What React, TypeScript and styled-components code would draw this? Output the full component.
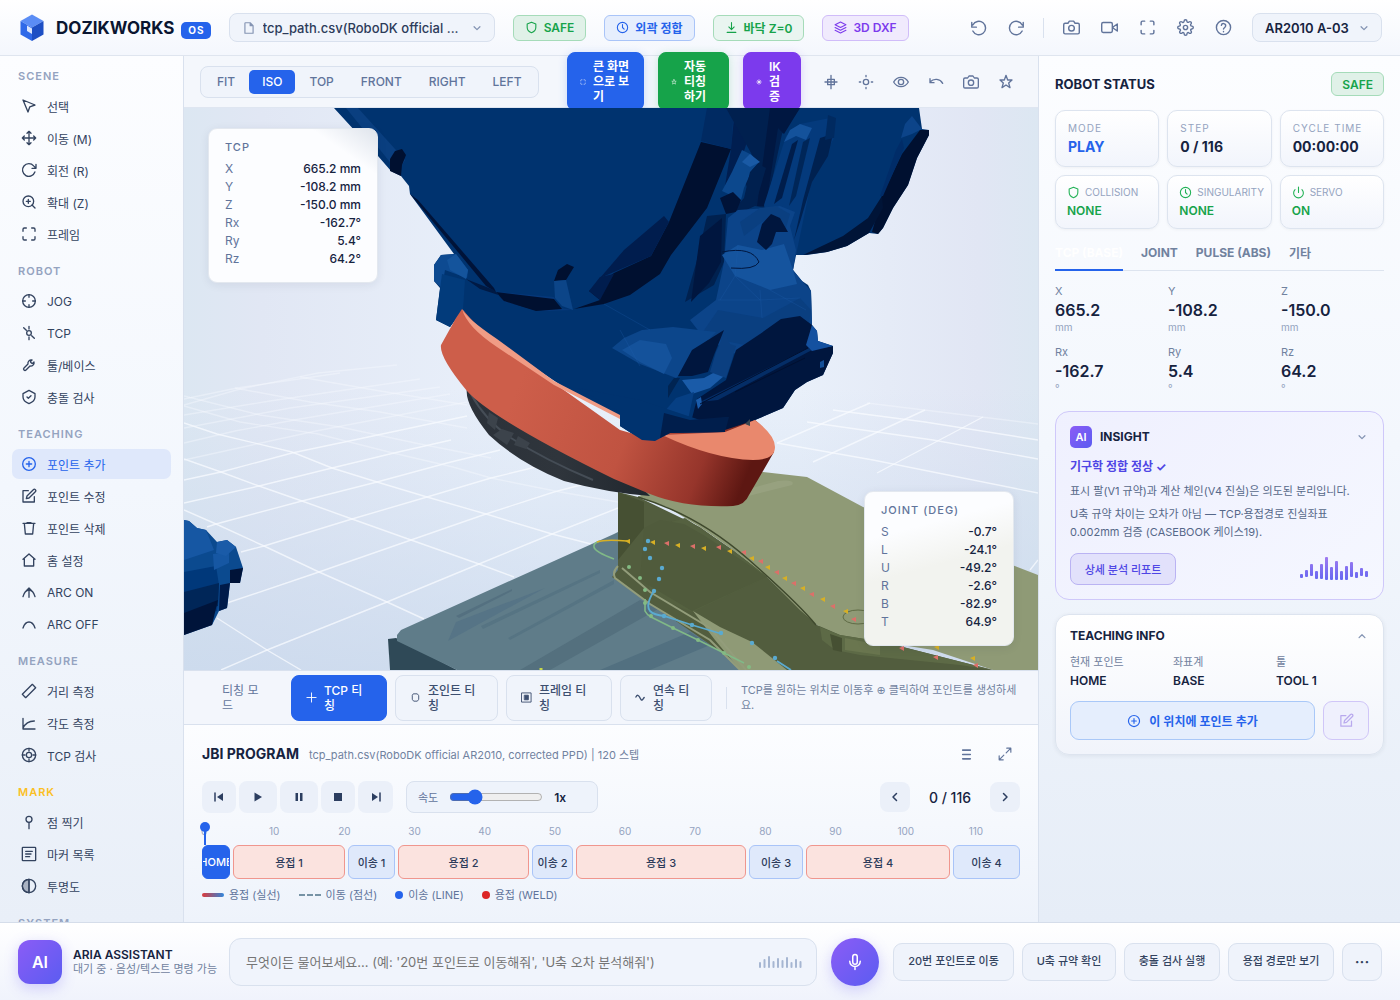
import React from "react";
import styled, { createGlobalStyle, css } from "styled-components";

const GlobalStyle = createGlobalStyle`
  * { box-sizing: border-box; }
  body {
    margin: 0;
    font-family: Inter, "Noto Sans CJK KR", sans-serif;
    font-size: 12px;
    color: #16233f;
    background: #eef3fa;
  }
  button, input, select { font-family: inherit; margin: 0; }
  button { cursor: pointer; }
  h1, h2, h3, p, dl, dd, dt, ul { margin: 0; padding: 0; font-weight: inherit; }
`;

/* ---------- icons ---------- */

const icons: Record<string, React.ReactNode> = {
  file: <path d="M6 3h8l5 5v13H5V4a1 1 0 0 1 1-1zM14 3v5h5" />,
  down: <path d="M5 9l7 7 7-7" />,
  up: <path d="M5 16l7-7 7 7" />,
  left: <path d="M15 5l-7 7 7 7" />,
  right: <path d="M9 5l7 7-7 7" />,
  shield: <path d="M12 2.500l8 3v6c0 5-3.500 8.500-8 10-4.500-1.500-8-5-8-10v-6z" />,
  clock: <><circle cx="12" cy="12" r="9.500" /><path d="M12 6.500V12l3 3" /></>,
  floor: <path d="M12 3v12M7 11l5 5 5-5M4 21h16" />,
  layers: <path d="M12 2L2 7l10 5 10-5zM2 12l10 5 10-5M2 17l10 5 10-5" />,
  undo: <path d="M2.500 5v6.500H9M4 8.500A9.500 9.500 0 1 1 4 17" />,
  redo: <path d="M21.500 5v6.500H15M20 8.500A9.500 9.500 0 1 0 20 17" />,
  camera: <><path d="M23 19a2 2 0 0 1-2 2H3a2 2 0 0 1-2-2V8a2 2 0 0 1 2-2h4l2-3h6l2 3h4a2 2 0 0 1 2 2z" /><circle cx="12" cy="13" r="4" /></>,
  video: <path d="M23 7l-7 5 7 5zM3 5h11a2 2 0 0 1 2 2v10a2 2 0 0 1-2 2H3a2 2 0 0 1-2-2V7a2 2 0 0 1 2-2z" />,
  corners: <path d="M8 3H5a2 2 0 0 0-2 2v3M16 3h3a2 2 0 0 1 2 2v3M21 16v3a2 2 0 0 1-2 2h-3M8 21H5a2 2 0 0 1-2-2v-3" />,
  gear: <><circle cx="12" cy="12" r="3" /><path d="M19.400 15a1.650 1.650 0 0 0 .33 1.820l.06.06a2 2 0 1 1-2.830 2.830l-.06-.06a1.650 1.650 0 0 0-2.800 1.170V21a2 2 0 0 1-4 0v-.09A1.650 1.650 0 0 0 7.200 19.700l-.06.06a2 2 0 1 1-2.830-2.830l.06-.06A1.650 1.650 0 0 0 3.200 14H3a2 2 0 0 1 0-4h.09A1.650 1.650 0 0 0 4.300 7.200l-.06-.06a2 2 0 1 1 2.830-2.830l.06.06A1.650 1.650 0 0 0 10 3.200V3a2 2 0 0 1 4 0v.09a1.650 1.650 0 0 0 2.800 1.210l.06-.06a2 2 0 1 1 2.830 2.830l-.06.06A1.650 1.650 0 0 0 20.800 10H21a2 2 0 0 1 0 4h-.09a1.650 1.650 0 0 0-1.510 1z" /></>,
  help: <><circle cx="12" cy="12" r="10" /><path d="M9 9a3 3 0 0 1 6 1c0 2-3 2.500-3 4M12 17.500v.5" /></>,
  cursor: <path d="M3 3l7.500 18 2.700-7.800L21 10.500z" />,
  move: <path d="M12 2v20M2 12h20M9 5l3-3 3 3M9 19l3 3 3-3M5 9l-3 3 3 3M19 9l3 3-3 3" />,
  rotate: <path d="M22.500 3.500v6h-6M20.800 15A9.500 9.500 0 1 1 19 5.800l3.500 3.700" />,
  zoom: <><circle cx="11" cy="11" r="8" /><path d="M21 21l-4.500-4.500M11 8v6M8 11h6" /></>,
  jog: <><circle cx="12" cy="12" r="9.500" /><path d="M12 2.500v4M12 17.500v4M2.500 12h4M17.500 12h4" /></>,
  tcp: <><circle cx="12" cy="12" r="3.500" /><path d="M12 2v4M12 18v4M4 4l4 4M16 16l4 4" /></>,
  wrench: <path d="M14.500 6.500a1 1 0 0 0 0 1.400l1.600 1.600a1 1 0 0 0 1.400 0l2-2a5 5 0 0 1-6 6L7.500 19.500a2 2 0 0 1-3-3l6-6a5 5 0 0 1 6-6z" />,
  check: <><path d="M12 2l9 5v5c0 5-4 8-9 10-5-2-9-5-9-10V7z" /><path d="M9 12l2 2 4-4" /></>,
  plus: <><circle cx="12" cy="12" r="9.500" /><path d="M12 8v8M8 12h8" /></>,
  edit: <path d="M11 4H3v17h17v-8M18.500 2.500a2.100 2.100 0 0 1 3 3L12 15l-4 1 1-4z" />,
  trash: <path d="M3 5h18M5 5l1.500 16h11L19 5M9 4h6" />,
  home: <path d="M3 11l9-8 9 8M5 10v11h14V10" />,
  arcOn: <path d="M3 19c2-7 5-10 9-10s7 3 9 10M12 20V6M8 10l4-4 4 4" />,
  arcOff: <path d="M3 18c2-6 5-9 9-9s7 3 9 9" />,
  ruler: <path d="M17 2l5 5L7 22l-5-5z" />,
  angle: <path d="M3 5v16h18M3 20C6 13 12 9 20 9" />,
  target: <><circle cx="12" cy="12" r="10" /><circle cx="12" cy="12" r="4" /><path d="M12 2v4M12 18v4M2 12h4M18 12h4" /></>,
  pin: <><circle cx="12" cy="8" r="4.500" /><path d="M12 12.500V22" /></>,
  list: <><rect x="2" y="2" width="20" height="20" rx="1" /><path d="M7 8h10M7 12h8M7 16h6" /></>,
  half: <><circle cx="12" cy="12" r="10" /><path d="M12 2v20" /><path d="M12 2a10 10 0 0 0 0 20z" fill="currentColor" fillOpacity="0.35" /></>,
  grid: <path d="M7 8h10v8H7zM12 2v20M3 12h18" />,
  joint: <><circle cx="12" cy="12" r="4" /><path d="M12 2v2M12 20v2M2 12h2M20 12h2" /></>,
  eye: <><path d="M1 12s4-7 11-7 11 7 11 7-4 7-11 7S1 12 1 12z" /><circle cx="12" cy="12" r="4" /></>,
  back: <path d="M3 7v6h6M3 12c6-6 15-5 19 2" />,
  star: <path d="M12 2l2.500 7H21l-5 4.500 2 7-6-4-6 4 2-7L3 9h6.500z" />,
  cross: <path d="M12 2v20M2 12h20" />,
  hex: <path d="M8 4h8l3 4v8l-3 4H8l-3-4V8z" />,
  frame: <><path d="M2 2h20v20H2z" /><path d="M8 7h8v10H8z" fill="currentColor" /></>,
  wave: <path d="M2 11c3-6 6-4 8 0s4 9 7 5l3-4" />,
  menu: <path d="M5 4h14M5 12h14M5 20h14" />,
  expand: <path d="M15 2h7v7M22 2l-8 8M9 22H2v-7M2 22l8-8" />,
  power: <path d="M18.400 6.600a9 9 0 1 1-12.800 0M12 2v10" />,
  mic: <path d="M12 2a3 3 0 0 0-3 3v7a3 3 0 0 0 6 0V5a3 3 0 0 0-3-3zM5 11a7 7 0 0 0 14 0M12 18v4" />,
  sun: <><circle cx="12" cy="12" r="4" /><path d="M12 2v20M2 12h20M5 5l14 14M19 5L5 19" /></>,
  start: <><path d="M4 4v16" strokeWidth="3" /><path d="M20 4v16L8 12z" fill="currentColor" stroke="none" /></>,
  end: <><path d="M20 4v16" strokeWidth="3" /><path d="M4 4v16l12-8z" fill="currentColor" stroke="none" /></>,
  play: <path d="M5 3v18l15-9z" fill="currentColor" stroke="none" />,
  pause: <path d="M5 4h5v16H5zM14 4h5v16h-5z" fill="currentColor" stroke="none" />,
  stop: <path d="M4 4h16v16H4z" fill="currentColor" stroke="none" />,
};

const Glyph = styled.svg`
  flex: none;
  display: block;
  fill: none;
  stroke: currentColor;
  stroke-linecap: round;
  stroke-linejoin: round;
`;

const Icon = ({ name, size = 16, weight = 2 }: { name: string; size?: number; weight?: number }) => (
  <Glyph viewBox="0 0 24 24" width={size} height={size} strokeWidth={weight} aria-hidden="true">
    {icons[name]}
  </Glyph>
);

/* ---------- shell ---------- */

const Shell = styled.div`
  display: grid;
  grid-template-rows: 56px minmax(0, 1fr) 78px;
  height: 100vh;
  min-width: 1280px;
  overflow: hidden;
`;

const Header = styled.header`
  display: flex;
  align-items: center;
  gap: 18px;
  padding: 0 18px;
  background: linear-gradient(#ffffff, #f4f7fd);
  border-bottom: 1px solid #dfe5ef;
`;

const Body = styled.div`
  display: grid;
  grid-template-columns: 184px minmax(0, 1fr) 362px;
  min-height: 0;
`;

/* ---------- header ---------- */

const Brand = styled.h1`
  display: flex;
  align-items: center;
  gap: 7px;
  font-size: 17px;
  font-weight: 700;
  color: #0a1530;
`;

const Logo = styled.svg`
  width: 28px;
  height: 28px;
  margin-right: 3px;
`;

const OsTag = styled.span`
  padding: 0 6px 0 7px;
  margin-top: 5px;
  font-size: 10px;
  line-height: 17px;
  font-weight: 700;
  letter-spacing: 1px;
  color: #fff;
  background: #2563eb;
  border-radius: 5px;
`;

const Picker = styled.label<{ $width: number }>`
  position: relative;
  display: flex;
  align-items: center;
  width: ${(p) => p.$width}px;
  height: 29px;
  padding: 0 12px;
  gap: 7px;
  border: 1px solid #d9e1ee;
  border-radius: 8px;
  background: #f0f4fb;
  color: #8494b3;
  select {
    flex: 1;
    min-width: 0;
    appearance: none;
    border: 0;
    padding: 0;
    background: transparent;
    font-size: 13px;
    font-weight: 500;
    color: #2c3b5a;
  }
`;

const RobotPicker = styled(Picker)`
  margin-left: -6px;
  select { font-weight: 600; color: #16233f; }
`;

type Tone = "green" | "blue" | "mint" | "violet";
const tones: Record<Tone, ReturnType<typeof css>> = {
  green: css`color: #16a34a; background: #e0f1e8; border-color: #a5dbb9;`,
  mint: css`color: #16a34a; background: #e9f5f0; border-color: #a5dbb9;`,
  blue: css`color: #2563eb; background: #e6eefd; border-color: #a9c4f8;`,
  violet: css`color: #7c3aed; background: #f0eafd; border-color: #d0bcf9;`,
};

const Badge = styled.span<{ $tone: Tone; $tight?: boolean }>`
  display: flex;
  align-items: center;
  gap: 6px;
  height: ${(p) => (p.$tight ? 24 : 26)}px;
  padding: 0 ${(p) => (p.$tight ? 10 : 11)}px;
  border: 1px solid;
  border-radius: 6px;
  font-size: 12px;
  font-weight: 600;
  white-space: nowrap;
  ${(p) => tones[p.$tone]}
`;

const HeaderTools = styled.div`
  display: flex;
  align-items: center;
  gap: 4px;
  margin-left: auto;
`;

const IconButton = styled.button<{ $w?: number; $h?: number }>`
  display: flex;
  align-items: center;
  justify-content: center;
  width: ${(p) => p.$w ?? 34}px;
  height: ${(p) => p.$h ?? 32}px;
  padding: 0;
  border: 0;
  border-radius: 8px;
  background: transparent;
  color: #61749b;
`;

const Rule = styled.span<{ $h: number; $m: number }>`
  flex: none;
  width: 1px;
  height: ${(p) => p.$h}px;
  margin: 0 ${(p) => p.$m}px;
  background: #d9e1ee;
`;

/* ---------- sidebar ---------- */

const Sidebar = styled.nav`
  display: flex;
  flex-direction: column;
  gap: 14px;
  padding: 12px 12px 0;
  overflow: hidden;
  border-right: 1px solid #d9e1ee;
  background: linear-gradient(#fcfdff, #f3f7fd 50%, #e9eff8);
`;

const NavGroup = styled.section`
  display: flex;
  flex-direction: column;
  gap: 2px;
`;

const NavTitle = styled.h2<{ $accent?: boolean }>`
  padding-left: 6px;
  margin-bottom: 5px;
  font-size: 11px;
  line-height: 16px;
  font-weight: 600;
  letter-spacing: 1px;
  color: ${(p) => (p.$accent ? "#fbbf24" : "#94a3c0")};
`;

const NavItem = styled.button<{ $active?: boolean }>`
  display: flex;
  align-items: center;
  gap: 10px;
  flex: none;
  height: 30px;
  padding: 0 9px;
  border: 0;
  border-radius: 7px;
  font-size: 12px;
  text-align: left;
  background: ${(p) => (p.$active ? "#dfe8fb" : "transparent")};
  color: ${(p) => (p.$active ? "#2563eb" : "#33435f")};
`;

/* ---------- centre ---------- */

const Centre = styled.main`
  display: flex;
  flex-direction: column;
  min-width: 0;
  min-height: 0;
`;

const Toolbar = styled.div`
  display: flex;
  align-items: center;
  flex: none;
  gap: 14px;
  height: 52px;
  padding: 0 16px;
  background: #f4f7fc;
  border-bottom: 1px solid #dfe6f1;
`;

const Segmented = styled.div`
  display: flex;
  gap: 1px;
  padding: 3px;
  border: 1px solid #d9e1ee;
  border-radius: 8px;
  background: #f0f4fb;
`;

const Segment = styled.button<{ $active?: boolean }>`
  height: 24px;
  padding: 0 13px;
  border: 0;
  border-radius: 5px;
  font-size: 12px;
  font-weight: 500;
  color: ${(p) => (p.$active ? "#fff" : "#61749b")};
  background: ${(p) => (p.$active ? "#2563eb" : "transparent")};
`;

const Actions = styled.div`
  display: flex;
  gap: 14px;
  margin-left: auto;
`;

const Action = styled.button<{ $color: string; $w: number }>`
  display: flex;
  align-items: center;
  gap: 7px;
  width: ${(p) => p.$w}px;
  padding: 6px 12px;
  border: 1px solid ${(p) => p.$color};
  border-radius: 8px;
  background: ${(p) => p.$color};
  box-shadow: 0 2px 10px ${(p) => p.$color}33;
  color: #fff;
  font-size: 12px;
  line-height: 15px;
  font-weight: 600;
  text-align: left;
  white-space: pre;
`;

const ToolGroup = styled.div`
  display: flex;
  gap: 3px;
`;

const Viewport = styled.section`
  position: relative;
  flex: 1;
  min-height: 0;
  overflow: hidden;
`;

const Scene = styled.svg`
  display: block;
  width: 100%;
  height: 100%;
`;

const Readout = styled.section<{ $corner: "top" | "bottom" }>`
  position: absolute;
  ${(p) => (p.$corner === "top" ? "top: 20px; left: 24px; width: 170px;" : "bottom: 24px; right: 24px; width: 150px;")}
  padding: 9px 16px 14px;
  border: 1px solid #e3e8ef;
  border-radius: 9px;
  background: ${(p) => (p.$corner === "top" ? "linear-gradient(215deg, #dfe4ec, #fcfdff 17%)" : "linear-gradient(165deg, #fcfdff 25%, #f2f3ef 48%)")};
  box-shadow: 0 2px 10px #1e293b14;
`;

const ReadoutTitle = styled.h2`
  margin-bottom: 4px;
  font-size: 11px;
  line-height: 18px;
  font-weight: 500;
  letter-spacing: 1px;
  color: #61749b;
`;

const ReadoutRow = styled.div`
  display: flex;
  justify-content: space-between;
  font-size: 12px;
  line-height: 18px;
  dt { color: #61749b; }
  dd { font-weight: 500; }
`;

const ModeBar = styled.div`
  display: flex;
  align-items: center;
  flex: none;
  height: 55px;
  padding: 0 16px 0 38px;
  border-top: 1px solid #d9e1ee;
  border-bottom: 1px solid #d9e1ee;
  background: #f3f6fc;
`;

const ModeLabel = styled.span`
  width: 69px;
  line-height: 15px;
  white-space: pre;
  color: #61749b;
`;

const ModeList = styled.div`
  display: flex;
  gap: 8px;
`;

const ModeButton = styled.button<{ $w: number; $active?: boolean }>`
  display: flex;
  align-items: center;
  gap: 7px;
  width: ${(p) => p.$w}px;
  height: 46px;
  padding: 0 14px;
  border: 1px solid ${(p) => (p.$active ? "#2563eb" : "#d9e1ee")};
  border-radius: 8px;
  background: ${(p) => (p.$active ? "#2563eb" : "#f0f4fb")};
  color: ${(p) => (p.$active ? "#fff" : "#3d4f70")};
  font-size: 12px;
  line-height: 15px;
  font-weight: 500;
  text-align: left;
  white-space: pre;
`;

const Hint = styled.p`
  flex: 1;
  min-width: 0;
  font-family: Inter, "Noto Sans CJK KR", "DejaVu Sans", sans-serif;
  font-size: 11px;
  line-height: 15px;
  color: #71829f;
  word-break: break-all;
`;

const Symbol = styled.span`
  font-family: "DejaVu Sans", sans-serif;
`;

const Program = styled.section`
  flex: none;
  height: 197px;
  padding: 14px 18px 0;
  background: linear-gradient(#fcfdff, #eef3fb);
`;

const Row = styled.div<{ $gap?: number; $h?: number }>`
  display: flex;
  align-items: center;
  gap: ${(p) => p.$gap ?? 8}px;
  ${(p) => p.$h && `height: ${p.$h}px;`}
`;

const Push = styled.div`
  display: flex;
  align-items: center;
  gap: 7px;
  margin-left: auto;
`;

const Heading = styled.h2<{ $size?: number }>`
  font-size: ${(p) => p.$size ?? 13}px;
  line-height: 18px;
  font-weight: 700;
  white-space: nowrap;
`;

const Sub = styled.span`
  font-size: 11px;
  color: #71829f;
  margin-left: 2px;
`;

const Transport = styled(Row)`
  margin-top: 12px;
`;

const PlayGroup = styled.div`
  display: flex;
  gap: 3px;
  margin-right: 5px;
`;

const PlayButton = styled(IconButton)`
  background: #ebf0f9;
  color: #2c3e60;
`;

const Speed = styled.label`
  display: flex;
  align-items: center;
  gap: 11px;
  width: 192px;
  height: 32px;
  padding: 0 11px;
  border: 1px solid #d9e1ee;
  border-radius: 8px;
  background: #eef3fb;
  font-size: 11px;
  color: #61749b;
  input { width: 94px; accent-color: #2563eb; }
  output { font-size: 12px; font-weight: 600; color: #16233f; }
`;

const Counter = styled.span`
  width: 66px;
  text-align: center;
  font-size: 14px;
  font-weight: 500;
`;

const Ticks = styled.div`
  display: grid;
  grid-template-columns: repeat(12, 1fr);
  margin: 10px 9px 0 -33px;
  font-size: 10px;
  line-height: 16px;
  text-align: center;
  color: #94a3c0;
`;

const Track = styled.div`
  position: relative;
  display: flex;
  gap: 3px;
  margin-top: 6px;
`;

const Playhead = styled.span`
  position: absolute;
  left: 2px;
  top: -18px;
  width: 2px;
  height: 18px;
  background: #2563eb;
  &::before {
    content: "";
    position: absolute;
    left: -4px;
    top: -5px;
    width: 10px;
    height: 10px;
    border-radius: 50%;
    background: #2563eb;
  }
`;

type Kind = "home" | "weld" | "move";
const Block = styled.button<{ $kind: Kind; $steps: number }>`
  flex: ${(p) => p.$steps} 1 0;
  display: flex;
  align-items: center;
  justify-content: center;
  min-width: 0;
  height: 34px;
  padding: 0;
  overflow: hidden;
  white-space: nowrap;
  border-radius: 6px;
  font-size: 11px;
  font-weight: 500;
  ${(p) =>
    p.$kind === "home"
      ? "border: 1px solid #2563eb; background: #2563eb; color: #fff;"
      : p.$kind === "weld"
      ? "border: 1px solid #f0968e; background: #fbe3df; color: #2c3b5a;"
      : "border: 1px solid #a9c4f8; background: #dfe9fb; color: #2c3b5a;"}
`;

const Legend = styled.ul`
  display: flex;
  gap: 18px;
  margin-top: 8px;
  list-style: none;
  font-size: 11px;
  line-height: 16px;
  color: #61749b;
  li { display: flex; align-items: center; gap: 5px; }
`;

const Swatch = styled.i<{ $kind: "solid" | "dash" | "dot"; $color?: string }>`
  width: ${(p) => (p.$kind === "dot" ? 8 : 22)}px;
  height: ${(p) => (p.$kind === "dot" ? 8 : p.$kind === "dash" ? 2 : 4)}px;
  border-radius: ${(p) => (p.$kind === "dash" ? 0 : 4)}px;
  background: ${(p) =>
    p.$kind === "solid"
      ? "linear-gradient(90deg, #dc3a3a, #2f86dc)"
      : p.$kind === "dash"
      ? "repeating-linear-gradient(90deg, #7793a5 0 6px, transparent 6px 8px)"
      : p.$color};
`;

/* ---------- right panel ---------- */

const Panel = styled.aside`
  display: flex;
  flex-direction: column;
  padding: 16px;
  min-width: 0;
  border-left: 1px solid #d9e1ee;
  background: linear-gradient(#fcfdff, #f3f7fd 45%, #e6edf7);
`;

const Spread = styled.div`
  display: flex;
  align-items: center;
  justify-content: space-between;
`;

const Cards = styled.div`
  display: grid;
  grid-template-columns: repeat(3, 1fr);
  gap: 8px;
  margin-top: 14px;
`;

const StatCard = styled.div<{ $short?: boolean }>`
  height: ${(p) => (p.$short ? 54 : 57)}px;
  padding: ${(p) => (p.$short ? "8px 0 0 11px" : "9px 0 0 12px")};
  border: 1px solid #dde4ef;
  border-radius: 10px;
  background: linear-gradient(#ffffff, #f2f5fc);
  box-shadow: 0 1px 3px #1e293b0d;
`;

const StatLabel = styled.div<{ $wide?: boolean }>`
  display: flex;
  align-items: center;
  gap: 5px;
  font-size: 10px;
  line-height: 17px;
  letter-spacing: ${(p) => (p.$wide ? "1px" : "0")};
  color: #94a3c0;
  white-space: nowrap;
  svg { color: #22b256; }
`;

const StatValue = styled.div<{ $color?: string; $small?: boolean }>`
  font-size: ${(p) => (p.$small ? 12 : 14)}px;
  line-height: ${(p) => (p.$small ? 19 : 20)}px;
  font-weight: ${(p) => (p.$small ? 600 : 700)};
  color: ${(p) => p.$color ?? "#16233f"};
`;

const Tabs = styled.div`
  display: flex;
  gap: 18px;
  height: 36px;
  margin-top: 6px;
  border-bottom: 1px solid #dde4ef;
`;

const Tab = styled.button<{ $active?: boolean }>`
  height: 36px;
  padding: 0;
  border: 0;
  border-bottom: 2px solid ${(p) => (p.$active ? "#2563eb" : "transparent")};
  background: transparent;
  font-size: 12px;
  font-weight: 700;
  white-space: nowrap;
  color: ${(p) => (p.$active ? "#fff" : "#71829f")};
`;

const Axes = styled.dl`
  display: grid;
  grid-template-columns: repeat(3, 1fr);
  gap: 10px;
  margin: 12px 0 16px;
  dt { font-size: 11px; line-height: 16px; color: #71829f; }
  dd { font-size: 16px; line-height: 22px; font-weight: 600; }
  small { display: block; font-size: 10px; line-height: 13px; font-weight: 400; color: #94a3c0; }
`;

const Insight = styled.section`
  padding: 14px;
  border: 1px solid #cfc8fa;
  border-radius: 14px;
  background: linear-gradient(135deg, #eff0fe, #f5f7ff);
`;

const AiMark = styled.span<{ $size: number }>`
  display: flex;
  flex: none;
  align-items: center;
  justify-content: center;
  width: ${(p) => p.$size}px;
  height: ${(p) => p.$size}px;
  border-radius: ${(p) => (p.$size > 30 ? 12 : 5)}px;
  background: linear-gradient(135deg, #8b5cf6, #5b5cf1);
  ${(p) => p.$size > 30 && "box-shadow: 0 4px 14px #6d5cf344;"}
  color: #fff;
  font-size: ${(p) => (p.$size > 30 ? 16 : 11)}px;
  font-weight: 600;
`;

const Muted = styled.span`
  display: flex;
  margin-left: auto;
  margin-right: 2px;
  color: #8494b3;
`;

const InsightTitle = styled.h3`
  margin-top: 9px;
  font-size: 12px;
  line-height: 20px;
  font-weight: 700;
  color: #4f46e5;
`;

const InsightText = styled.p`
  margin-top: 5px;
  font-size: 11px;
  line-height: 18px;
  color: #566889;
`;

const ReportButton = styled.button`
  width: 106px;
  height: 32px;
  padding: 0;
  border: 1px solid #bab3f3;
  border-radius: 8px;
  background: #e2e1fb;
  color: #4f46e5;
  font-size: 11px;
  font-weight: 500;
`;

const InsightFoot = styled(Spread)`
  margin-top: 12px;
`;

const Bars = styled.svg`
  display: block;
  flex: none;
`;

const TeachCard = styled.section`
  margin-top: 14px;
  padding: 12px 14px 14px;
  border: 1px solid #dde4ef;
  border-radius: 14px;
  background: linear-gradient(#ffffff, #f1f4fb);
  box-shadow: 0 1px 4px #1e293b12;
`;

const TeachGrid = styled.dl`
  display: grid;
  grid-template-columns: repeat(3, 1fr);
  gap: 10px;
  margin: 8px 0 10px;
  dt { font-size: 11px; line-height: 18px; color: #71829f; }
  dd { font-size: 12px; line-height: 20px; font-weight: 600; }
`;

const AddButton = styled.button`
  display: flex;
  align-items: center;
  justify-content: center;
  flex: 1;
  gap: 8px;
  height: 39px;
  border: 1px solid #a9c8f8;
  border-radius: 9px;
  background: #e5eefd;
  color: #2563eb;
  font-size: 12px;
  font-weight: 600;
`;

const EditButton = styled(IconButton)`
  border: 1px solid #d0c6f8;
  border-radius: 9px;
  background: #eff0fd;
  color: #b9a9ee;
`;

/* ---------- footer ---------- */

const Footer = styled.footer`
  display: flex;
  align-items: center;
  gap: 14px;
  padding: 0 18px;
  border-top: 1px solid #d5ddea;
  background: linear-gradient(#ffffff, #f0f3fc);
`;

const Assistant = styled.div`
  display: flex;
  align-items: center;
  gap: 11px;
  width: 197px;
`;

const AssistantName = styled.div`
  white-space: nowrap;
  font-size: 12px;
  line-height: 14px;
  font-weight: 600;
  small { display: block; font-size: 11px; font-weight: 400; color: #71829f; }
`;

const Ask = styled.label`
  display: flex;
  align-items: center;
  flex: 1;
  height: 48px;
  padding: 0 14px 0 16px;
  border: 1px solid #d9e1ee;
  border-radius: 12px;
  background: #f0f4fc;
  input {
    flex: 1;
    min-width: 0;
    padding: 0;
    border: 0;
    outline: 0;
    background: transparent;
    font-size: 13px;
  }
`;

const MicButton = styled.button`
  display: flex;
  align-items: center;
  justify-content: center;
  flex: none;
  width: 48px;
  height: 48px;
  padding: 0;
  border: 0;
  border-radius: 50%;
  color: #fff;
  background: linear-gradient(135deg, #8b5cf6, #5b5cf1);
  box-shadow: 0 4px 14px #6d5cf344;
`;

const Chip = styled.button<{ $w: number }>`
  width: ${(p) => p.$w}px;
  height: 38px;
  padding: 0 0 4px;
  border: 1px solid #d9e1ee;
  border-radius: 9px;
  background: #eff3fb;
  color: #33435f;
  font-size: 11px;
  font-weight: 500;
  white-space: nowrap;
`;

const MoreChip = styled(Chip)`
  padding: 0;
  font-size: 16px;
`;

/* ---------- data ---------- */

const nav: { title: string; accent?: boolean; items: [string, string][] }[] = [
  { title: "SCENE", items: [["cursor", "선택"], ["move", "이동 (M)"], ["rotate", "회전 (R)"], ["zoom", "확대 (Z)"], ["corners", "프레임"]] },
  { title: "ROBOT", items: [["jog", "JOG"], ["tcp", "TCP"], ["wrench", "툴/베이스"], ["check", "충돌 검사"]] },
  { title: "TEACHING", items: [["plus", "포인트 추가"], ["edit", "포인트 수정"], ["trash", "포인트 삭제"], ["home", "홈 설정"], ["arcOn", "ARC ON"], ["arcOff", "ARC OFF"]] },
  { title: "MEASURE", items: [["ruler", "거리 측정"], ["angle", "각도 측정"], ["target", "TCP 검사"]] },
  { title: "MARK", accent: true, items: [["pin", "점 찍기"], ["list", "마커 목록"], ["half", "투명도"]] },
  { title: "SYSTEM", items: [] },
];

const tcp = [["X", "665.2 mm"], ["Y", "-108.2 mm"], ["Z", "-150.0 mm"], ["Rx", "-162.7°"], ["Ry", "5.4°"], ["Rz", "64.2°"]];
const joints = [["S", "-0.7°"], ["L", "-24.1°"], ["U", "-49.2°"], ["R", "-2.6°"], ["B", "-82.9°"], ["T", "64.9°"]];
const axes = [["X", "665.2", "mm"], ["Y", "-108.2", "mm"], ["Z", "-150.0", "mm"], ["Rx", "-162.7", "°"], ["Ry", "5.4", "°"], ["Rz", "64.2", "°"]];
const blocks: [string, Kind, number][] = [
  ["HOME", "home", 26], ["용접 1", "weld", 110], ["이송 1", "move", 45], ["용접 2", "weld", 129], ["이송 2", "move", 39],
  ["용접 3", "weld", 168], ["이송 3", "move", 52], ["용접 4", "weld", 142], ["이송 4", "move", 65],
];
const insightBars: [number, number][] = [[17, 4], [13, 7], [7, 12], [14, 8], [7, 15], [0, 23], [10, 13], [4, 19], [14, 9], [9, 14], [5, 15], [15, 6], [11, 8], [14, 6]];
const inputBars = [6, 9, 12, 7, 10, 8, 11, 6, 9, 7];

/* ---------- 3D scene ---------- */

const gridPaths = [
  "M184 459L221 472 259 486 302 501 352 519 411 540 479 564 514 577",
  "M184 510L216 524 264 546 319 572 387 602 424 619",
  "M217 618L267 650 301 670",
  "M184 423L217 434 292 452 332 468 377 482 427 497 486 514 552 534 591 544",
  "M221 670L267 650 387 602 479 564 552 534 618 508",
  "M227 603L319 572 411 540 486 514 554 492 600 480",
  "M241 552L264 546 352 519 427 497 491 478 540 466",
  "M207 527L216 524 302 501 377 482 447 463 500 450",
  "M184 503L259 486 332 468 394 453 451 440",
  "M184 480L221 472 292 453 354 440 467 416",
  "M833 410L925 422 1038 440",
  "M807 422L933 440 1038 459",
  "M777 443L873 460 1038 493",
  "M870 403L777 443M925 410L813 462M983 417L877 473",
  "M1038 560l-8 10",
];

const farGridPaths = [
  "M184 406L240 422 318 434 393 453 453 467 491 478 560 492 618 502",
  "M184 396L260 415 340 427 420 444 491 458",
  "M184 460L252 445 316 431 467 402",
  "M184 443L235 431 300 419 450 394",
  "M184 428L290 408 440 387",
  "M184 415L270 401 420 379",
  "M184 405L240 389 318 373 397 365",
  "M184 399L237 388 340 373",
  "M235 388L310 402 380 412 467 428",
  "M300 377L380 391 467 405",
  "M867 403L1038 424",
];

const shapes: [string, string][] = [
  // left joint fragment
  ["#0b4a8f", "184,520 189,521 197,528 206,530 217,542 227,540 236,547 243,568 240,583 230,583 227,608 219,611 212,625 184,635"],
  ["#1657a3", "184,520 189,521 197,528 206,530 214,550 184,560"],
  ["#00387a", "184,572 216,566 219,585 217,611 184,618"],
  ["#002658", "184,592 219,583 218,606 184,616"],
  ["#00143a", "184,613 218,600 212,625 184,635"],
  ["#1657a3", "213,554 229,552 229,563 214,570"],
  ["#1a5ba8", "217,542 227,540 236,547 226,556 216,553"],
  ["#001338", "230,570 243,568 240,583 230,583"],
  ["#001b4a", "220,585 230,583 227,608 219,611"],
  // base plate
  ["#2f4957", "388,639 396,638 457,670 390,670"],
  ["#5f7c89", "618,532 614,534 401,630 397,635 397,641 457,670 750,670 750,590 620,570"],
  ["#567486", "448,641 456,622 545,588"],
  ["#567483", "481,626 600,570 600,573 483,629"],
  ["#567483", "508,638 614,580 614,584 510,640"],
  ["#547080", "456,616 512,589 512,591 459,618"],
  ["#54707e", "520,670 640,600 660,608 550,670"],
  ["#527080", "600,670 690,632 710,645 650,670"],
  // work-piece
  ["#525d3e", "618,492 638,497 700,527 760,570 817,625 993,670 747,670 612,577 618,570"],
  ["#8f9a76", "638,497 680,470 763,472 807,477 863,507 1038,575 1038,670 993,670 933,650 883,642 840,635 817,625 800,610 767,577 733,550 700,527 667,507"],
  ["#465033", "618,492 644,502 644,528 618,560"],
  ["#556140", "644,530 685,518 733,550 767,577 692,612 650,596"],
  ["#505b3c", "644,528 660,520 684,524 705,536 767,577 692,611 640,580"],
  ["#5d6a46", "820,627 840,635 883,642 993,670 960,665 860,655 835,650 822,640"],
  ["#465033", "830,634 842,638 842,652 833,650"],
  ["#6a764f", "845,638 880,645 880,655 845,650"],
  ["#8f9a76", "693,611 720,627 752,642 787,670 740,670 715,640"],
];

const robot: [string, string][] = [
  ["#00336f", "334,108 378,156 391,171 401,176 409,186 410,194 454,254 441,255 434,265 434,281 440,288 436,320 450,327 462,309 476,326 517,356 577,396 620,418 620,426 642,440 655,441 670,433 725,432 755,420 783,408 795,390 807,382 823,375 833,353 833,346 818,341 817,331 812,325 811,291 808,285 802,281 793,270 794,255 807,255 827,252 847,246 869,233 878,234 883,228 893,208 908,185 917,158 929,135 929,130 922,129 919,108"],
  ["#0a3f80", "346,108 358,108 405,160 398,172"],
  ["#001338", "410,194 418,200 494,288 496,292 486,286"],
  ["#0d4a91", "434,265 441,255 456,254 468,270 467,278 445,270 442,288 434,281"],
  ["#14549c", "447,260 456,254 468,270 466,279 450,270"],
  ["#023b7b", "442,274 465,280 463,310 450,327 436,320"],
  ["#001a44", "466,279 494,290 504,301 538,311 520,302 480,289"],
  // lower rim of the main casting
  ["#06387a", "497,292 554,297 560,308 573,310 545,311 505,302"],
  ["#001030", "496,292 554,299 562,309 536,311 504,301"],
  ["#001030", "554,281 558,270 567,264 574,267 566,280"],
  ["#0c4588", "554,281 566,280 573,310 562,306 555,298"],
  ["#001030", "390,171 390,159 395,151 402,149 406,155 402,165 401,176"],
  ["#001030", "589,291 614,273 651,256 669,222 701,142 731,149 707,208 671,255 660,274 630,295 604,304 574,309 600,300"],
  ["#001d4e", "600,278 651,256 669,222 664,216 624,250"],
  ["#001d4e", "589,291 600,277 614,274 600,300"],
  ["#002a62", "707,108 734,108 731,149 701,141"],
  ["#001e50", "734,118 754,112 749,136 731,190 725,186 731,149"],
  ["#00204f", "726,108 800,108 782,134 766,208 755,206 744,180 756,162"],
  ["#001741", "770,108 800,108 784,134 778,128 766,206 757,206"],
  ["#0c488d", "732,172 742,150 750,154 759,162 752,170 744,188 741,200 722,191"],
  ["#1a5aa5", "742,162 750,154 760,162 750,167"],
  ["#00204f", "744,198 750,172 758,164 766,168 755,206 740,213 735,208"],
  ["#001338", "720,198 733,192 741,200 736,212 726,214"],
  ["#00214f", "707,216 726,214 724,262 714,285 685,302 697,260"],
  ["#00163f", "700,236 722,218 721,262 709,283 691,302"],
  // actuator housing
  ["#043a7c", "786,136 800,124 830,118 834,138 812,178 800,236 793,270 770,240 764,205"],
  ["#14529b", "784,142 790,130 800,124 812,128 806,140 796,136"],
  ["#001d4b", "792,144 798,140 782,198 774,204"],
  ["#002658", "803,142 810,138 796,196 789,206"],
  ["#002150", "820,138 833,134 828,156 812,182 800,222 794,240 803,200"],
  ["#002a60", "828,115 836,118 834,138 825,140"],
  ["#0c4489", "728,218 738,210 766,208 780,206 795,212 790,226 796,250 793,270 802,281 811,291 812,325 806,342 770,350 740,356 704,338 690,320 716,300 724,262"],
  ["#15549e", "722,255 738,245 762,250 784,244 793,270 797,284 770,290 735,276"],
  ["#0a3f80", "740,222 760,208 776,206 790,214 786,228 776,218 762,222 744,236"],
  ["#00163e", "757,242 762,224 771,214 780,218 788,232 776,232 772,244 766,250"],
  ["#0a3f80", "718,310 763,318 800,298 811,310 806,342 770,350 700,336"],
  ["#00163e", "736,350 760,334 781,319 800,316 812,325 808,346 823,348 833,346 833,353 823,375 807,382 795,390 783,408 755,420 725,432 690,426 697,399 726,380"],
  ["#042d66", "700,402 808,348 812,350 718,400"],
  ["#1451a0", "812,325 817,331 818,341 833,346 812,351 806,345"],
  ["#145099", "820,362 824,360 824,367 820,368"],
  ["#0c468b", "612,348 624,338 642,330 673,327 716,332 704,344 688,368 676,378 640,364"],
  ["#14529b", "622,350 640,340 666,344 672,358 664,374 640,362"],
  ["#00163e", "678,376 692,350 724,330 714,355 708,372 692,376"],
  ["#1a5ba8", "682,380 704,378 726,366 724,376 710,388 692,394"],
  ["#0b3f80", "725,332 730,344 736,346 732,360 726,378 710,372 716,352"],
  ["#002452", "668,386 674,378 680,378 668,398"],
  ["#063f83", "676,398 694,392 687,424 664,412"],
  ["#001e4c", "664,416 690,426 725,417 729,417 725,432 670,433 660,438"],
  ["#1a5cab", "696,400 701,397 702,404 698,409"],
  // casting on the right
  ["#0c4489", "905,124 912,116 922,129 912,134 901,138"],
  ["#001030", "929,130 929,135 917,158 908,185 893,208 883,228 878,234 872,232 882,196 902,154 920,130"],
  ["#001437", "803,255 843,236 868,218 882,196 883,208 869,233 847,246 827,252"],
  ["#002c68", "902,139 896,150 880,196 883,196 904,148"],
];

const lightFacets = [
  "M604 304L650 330M620 330L640 366",
  "M735 276L760 300 800 298M760 290L762 318M718 300L760 300M735 276L720 300M738 245L735 276M770 290L806 310",
];

const yellow = [[628, 541], [653, 542], [678, 545], [704, 548], [730, 551], [752, 558], [768, 567], [785, 578], [803, 588], [823, 599], [846, 611], [937, 647], [973, 658]];
const red = [[667, 543], [693, 546], [719, 547], [744, 552], [761, 561], [777, 572], [794, 583], [812, 594], [833, 606], [854, 619], [902, 648], [936, 657], [976, 665]];
const cyan = [[648, 541], [645, 549], [650, 558], [662, 568], [659, 579], [654, 591], [664, 616], [692, 625], [721, 633], [752, 643], [775, 658]];
const green = [[629, 567], [640, 578], [645, 590], [645, 603], [651, 616], [673, 628], [698, 640], [724, 653], [749, 667]];

const RobotScene = () => (
  <Scene viewBox="184 108 854 562" preserveAspectRatio="xMidYMid slice" role="img" aria-label="3D robot view">
    <defs>
      <linearGradient id="sky" x1="0" x2="1" y1="0" y2="0">
        <stop offset="0" stopColor="#dce7f2" />
        <stop offset="0.09" stopColor="#e1e7f4" />
        <stop offset="0.42" stopColor="#eaf1fb" />
        <stop offset="0.72" stopColor="#e9f0fa" />
        <stop offset="0.93" stopColor="#e1e6f4" />
        <stop offset="1" stopColor="#dce7f2" />
      </linearGradient>
      <linearGradient id="ground" x1="0" x2="0" y1="0" y2="1">
        <stop offset="0.5" stopColor="#c9d8ec" stopOpacity="0" />
        <stop offset="1" stopColor="#c9d8ec" stopOpacity="0.8" />
      </linearGradient>
      <linearGradient id="ring" gradientUnits="userSpaceOnUse" x1="520" y1="380" x2="768" y2="480">
        <stop offset="0" stopColor="#cd5e4a" />
        <stop offset="0.45" stopColor="#c05341" />
        <stop offset="0.75" stopColor="#96352b" />
        <stop offset="0.92" stopColor="#5d1712" />
      </linearGradient>
      <linearGradient id="disc" x1="0" x2="1" y1="0" y2="0">
        <stop offset="0" stopColor="#2b3139" />
        <stop offset="0.5" stopColor="#2f353c" />
        <stop offset="1" stopColor="#20272e" />
      </linearGradient>
    </defs>
    <rect x="184" y="108" width="854" height="562" fill="url(#sky)" />
    <rect x="184" y="108" width="854" height="562" fill="url(#ground)" />
    <g fill="none" stroke="#f8fbff" strokeWidth="1.4">
      <g strokeOpacity="0.75">{gridPaths.map((d) => <path key={d} d={d} />)}</g>
      <g strokeOpacity="0.4">{farGridPaths.map((d) => <path key={d} d={d} />)}</g>
    </g>
    {shapes.map(([fill, points]) => <polygon key={points} fill={fill} points={points} />)}
    <path d="M618 566q-6 6-3 12l35 26 60 36 30 30M622 568l28 24 60 36 36 42" fill="none" stroke="#939d7b" strokeWidth="2" />
    <path d="M638 497q60 18 110 62t68 66" fill="none" stroke="#3f492d" strokeWidth="1.5" />
    <ellipse cx="858" cy="617" rx="15" ry="7" fill="none" stroke="#5f6b45" />
    <path d="M708 500l70-19q18-2 14 4l-75 19z" fill="#9da785" opacity="0.6" />
    <path d="M467 388q-3 16 22 47 30 28 75 46 45 12 86 15l-20-20-90-45z" fill="url(#disc)" />
    <path d="M471 394q14 26 40 44 34 22 82 42" fill="none" stroke="#454d56" strokeWidth="2" />
    <path d="M489 412l9 6-3 12-8-7zM502 429l12 4-7 12-14-10zM518 436l12 7-4 6-12-4z" fill="#3c434b" />
    {robot.map(([fill, points]) => <polygon key={points} fill={fill} points={points} />)}
    <g fill="none" stroke="#1e61b0" strokeOpacity="0.25">
      {lightFacets.map((d) => <path key={d} d={d} />)}
    </g>
    <path d="M722 252q30-6 37 10-4 8-28 6" fill="none" stroke="#00163e" />
    <path d="M700 404l108-56M735 392l70-34" fill="none" stroke="#001030" />
    <path d="M462 309L456 318 441 345Q439 357 467 391Q492 419 614 479L650 494Q685 508 733 506 745 505 749 495L774 452Q773 435 755 420L725 430 670 432 655 440 620 430 554 383 497 343Q479 329 462 309Z" fill="url(#ring)" />
    <path d="M662 435l63-3 30-12q20 15 20 27 0 13-22 13-40-1-91-25z" fill="#e9886d" />
    <path d="M462 309q4 9 35 30l57 42 66 34v4l-66-34-57-38q-30-20-35-38z" fill="#f09c85" />
    <polygon points="577,388 620,412 620,426 642,440 655,441 670,433 725,432 700,420 640,400" fill="#00336f" />
    <polygon points="664,413 690,420 725,417 725,432 670,433 660,438" fill="#001e4c" />
    <polygon points="745,424 750,419 750,426" fill="#3d4750" />
    <path d="M600 541q-7 2-6 6 1 5 20 12M645 599v12q2 4 6 6l22 11 25 12 26 13 20 10" fill="none" stroke="#80b987" strokeWidth="1.6" />
    <path d="M597 542q8-3 30-1" fill="none" stroke="#d7b025" strokeWidth="1.6" />
    <path d="M654 591q-9 14-4 20 4 4 14 5l28 9 30 9M777 661l14 9" fill="none" stroke="#5aaad0" strokeWidth="1.8" />
    {green.map(([x, y]) => <circle key={`${x}-${y}`} cx={x} cy={y} r="2" fill="#83bb84" />)}
    {cyan.map(([x, y]) => <circle key={`${x}-${y}`} cx={x} cy={y} r="2.200" fill="#5aaad0" />)}
    {yellow.map(([x, y]) => <path key={`${x}-${y}`} d={`M${x - 3} ${y}l5-2v5z`} fill="#d7b025" />)}
    {red.map(([x, y]) => <path key={`${x}-${y}`} d={`M${x - 3} ${y}l5-2v5z`} fill="#dc7069" />)}
    <path d="M541 668v3" stroke="#c8d94a" strokeWidth="3" />
  </Scene>
);

export default function App() {
  return (
    <Shell>
      <GlobalStyle />
      <Header>
        <Brand>
          <Logo viewBox="0 0 28 28" aria-hidden="true">
            <path d="M14 0.500L25.500 7 14 13.500 2.500 7z" fill="#5b8df5" />
            <path d="M2.500 7L14 13.500v13.500L2.500 20.500z" fill="#2f69e8" />
            <path d="M25.500 7L14 13.500v13.500l11.500-6.500z" fill="#1d4fc4" />
            <path d="M9 11.500l5 3v5.500l-5-3z" fill="#dbe6fd" />
          </Logo>
          DOZIKWORKS<OsTag>OS</OsTag>
        </Brand>
        <Picker $width={266}>
          <Icon name="file" size={14} />
          <select aria-label="파일"><option>tcp_path.csv(RoboDK official ...</option></select>
          <Icon name="down" size={10} weight={3} />
        </Picker>
        <Badge $tone="green"><Icon name="shield" size={13} />SAFE</Badge>
        <Badge $tone="blue"><Icon name="clock" size={13} />외곽 정합</Badge>
        <Badge $tone="mint"><Icon name="floor" size={13} />바닥 Z=0</Badge>
        <Badge $tone="violet"><Icon name="layers" size={13} />3D DXF</Badge>
        <HeaderTools>
          <IconButton aria-label="실행 취소"><Icon name="undo" size={17} /></IconButton>
          <IconButton aria-label="다시 실행"><Icon name="redo" size={17} /></IconButton>
          <Rule $h={20} $m={6} />
          {["camera", "video", "corners", "gear", "help"].map((n) => (
            <IconButton key={n} aria-label={n}><Icon name={n} size={17} /></IconButton>
          ))}
        </HeaderTools>
        <RobotPicker $width={130}>
          <select aria-label="로봇"><option>AR2010 A-03</option></select>
          <Icon name="down" size={10} weight={3} />
        </RobotPicker>
      </Header>

      <Body>
        <Sidebar>
          {nav.map((g) => (
            <NavGroup key={g.title}>
              <NavTitle $accent={g.accent}>{g.title}</NavTitle>
              {g.items.map(([icon, label]) => (
                <NavItem key={label} $active={label === "포인트 추가"}><Icon name={icon} />{label}</NavItem>
              ))}
            </NavGroup>
          ))}
        </Sidebar>

        <Centre>
          <Toolbar>
            <Segmented>
              {["FIT", "ISO", "TOP", "FRONT", "RIGHT", "LEFT"].map((v) => <Segment key={v} $active={v === "ISO"}>{v}</Segment>)}
            </Segmented>
            <Actions>
              <Action $color="#2563eb" $w={77}><Icon name="corners" size={6} />{"큰 화면\n으로 보\n기"}</Action>
              <Action $color="#16a34a" $w={71}><Icon name="star" size={6} />{"자동\n티칭\n하기"}</Action>
              <Action $color="#7c3aed" $w={58}><Icon name="sun" size={6} />{"IK\n검\n증"}</Action>
            </Actions>
            <ToolGroup>
              {["grid", "joint", "eye", "back", "camera", "star"].map((n) => (
                <IconButton key={n} $w={32} aria-label={n}><Icon name={n} size={16} /></IconButton>
              ))}
            </ToolGroup>
          </Toolbar>

          <Viewport>
            <RobotScene />
            <Readout $corner="top">
              <ReadoutTitle>TCP</ReadoutTitle>
              <dl>{tcp.map(([k, v]) => <ReadoutRow key={k}><dt>{k}</dt><dd>{v}</dd></ReadoutRow>)}</dl>
            </Readout>
            <Readout $corner="bottom">
              <ReadoutTitle>JOINT (DEG)</ReadoutTitle>
              <dl>{joints.map(([k, v]) => <ReadoutRow key={k}><dt>{k}</dt><dd>{v}</dd></ReadoutRow>)}</dl>
            </Readout>
          </Viewport>

          <ModeBar>
            <ModeLabel>{"티칭 모\n드"}</ModeLabel>
            <ModeList>
              <ModeButton $w={96} $active><Icon name="cross" size={11} />{"TCP 티\n칭"}</ModeButton>
              <ModeButton $w={103}><Icon name="hex" size={11} />{"조인트 티\n칭"}</ModeButton>
              <ModeButton $w={106}><Icon name="frame" size={11} />{"프레임 티\n칭"}</ModeButton>
              <ModeButton $w={92}><Icon name="wave" size={11} weight={3} />{"연속 티\n칭"}</ModeButton>
            </ModeList>
            <Rule $h={22} $m={14} />
            <Hint>TCP를 원하는 위치로 이동후 <Symbol>⊕</Symbol> 클릭하여 포인트를 생성하세요.</Hint>
          </ModeBar>

          <Program>
            <Row $h={30}>
              <Heading $size={14}>JBI PROGRAM</Heading>
              <Sub>tcp_path.csv(RoboDK official AR2010, corrected PPD) | 120 스텝</Sub>
              <Push>
                <IconButton aria-label="목록"><Icon name="menu" size={13} weight={3} /></IconButton>
                <IconButton aria-label="확장" $w={30}><Icon name="expand" size={14} /></IconButton>
              </Push>
            </Row>
            <Transport $h={32}>
              <PlayGroup>
                {[["start", 34], ["play", 38], ["pause", 38], ["stop", 34], ["end", 35]].map(([n, w]) => (
                  <PlayButton key={n} $w={w as number} aria-label={n as string}><Icon name={n as string} size={12} /></PlayButton>
                ))}
              </PlayGroup>
              <Speed>속도<input type="range" min={0.1} max={4} step={0.1} defaultValue={1} /><output>1x</output></Speed>
              <Push>
                <PlayButton $w={30} $h={30} aria-label="이전"><Icon name="left" size={12} weight={3} /></PlayButton>
                <Counter>0 / 116</Counter>
                <PlayButton $w={30} $h={30} aria-label="다음"><Icon name="right" size={12} weight={3} /></PlayButton>
              </Push>
            </Transport>
            <Ticks>{Array.from({ length: 12 }, (_, i) => <span key={i}>{i * 10}</span>)}</Ticks>
            <Track>
              {blocks.map(([label, kind, steps]) => <Block key={label} $kind={kind} $steps={steps}>{label}</Block>)}
              <Playhead />
            </Track>
            <Legend>
              <li><Swatch $kind="solid" />용접 (실선)</li>
              <li><Swatch $kind="dash" />이동 (점선)</li>
              <li><Swatch $kind="dot" $color="#2563eb" />이송 (LINE)</li>
              <li><Swatch $kind="dot" $color="#dc2626" />용접 (WELD)</li>
            </Legend>
          </Program>
        </Centre>

        <Panel>
          <Spread><Heading>ROBOT STATUS</Heading><Badge $tone="green" $tight>SAFE</Badge></Spread>
          <Cards>
            <StatCard><StatLabel $wide>MODE</StatLabel><StatValue $color="#2563eb">PLAY</StatValue></StatCard>
            <StatCard><StatLabel $wide>STEP</StatLabel><StatValue>0 / 116</StatValue></StatCard>
            <StatCard><StatLabel $wide>CYCLE TIME</StatLabel><StatValue>00:00:00</StatValue></StatCard>
            <StatCard $short><StatLabel><Icon name="shield" size={13} />COLLISION</StatLabel><StatValue $small $color="#16a34a">NONE</StatValue></StatCard>
            <StatCard $short><StatLabel><Icon name="clock" size={13} />SINGULARITY</StatLabel><StatValue $small $color="#16a34a">NONE</StatValue></StatCard>
            <StatCard $short><StatLabel><Icon name="power" size={13} />SERVO</StatLabel><StatValue $small $color="#16a34a">ON</StatValue></StatCard>
          </Cards>
          <Tabs role="tablist">
            {["TCP (BASE)", "JOINT", "PULSE (ABS)", "기타"].map((t, i) => <Tab key={t} role="tab" $active={i === 0}>{t}</Tab>)}
          </Tabs>
          <Axes>
            {axes.map(([k, v, u]) => <div key={k}><dt>{k}</dt><dd>{v}<small>{u}</small></dd></div>)}
          </Axes>
          <Insight>
            <Row>
              <AiMark $size={22}>AI</AiMark><Heading $size={12}>INSIGHT</Heading>
              <Muted><Icon name="down" size={10} weight={3} /></Muted>
            </Row>
            <InsightTitle>기구학 정합 정상 ✓</InsightTitle>
            <InsightText>표시 팔(V1 규약)과 계산 체인(V4 진실)은 의도된 분리입니다.</InsightText>
            <InsightText>U축 규약 차이는 오차가 아님 — TCP·용접경로 진실좌표 0.002mm 검증 (CASEBOOK 케이스19).</InsightText>
            <InsightFoot>
              <ReportButton>상세 분석 리포트</ReportButton>
              <Bars width="69" height="24" viewBox="0 0 69 24" aria-hidden="true">
                <defs>
                  <linearGradient id="bars" gradientUnits="userSpaceOnUse" x1="0" y1="0" x2="0" y2="24">
                    <stop offset="0" stopColor="#a07bf0" /><stop offset="1" stopColor="#6366f1" />
                  </linearGradient>
                </defs>
                {insightBars.map(([y, h], i) => <rect key={i} x={i * 5} y={y} width="3" height={h} rx="1" fill="url(#bars)" />)}
              </Bars>
            </InsightFoot>
          </Insight>
          <TeachCard>
            <Row>
              <Heading $size={12}>TEACHING INFO</Heading>
              <Muted><Icon name="up" size={10} weight={3} /></Muted>
            </Row>
            <TeachGrid>
              <div><dt>현재 포인트</dt><dd>HOME</dd></div>
              <div><dt>좌표계</dt><dd>BASE</dd></div>
              <div><dt>툴</dt><dd>TOOL 1</dd></div>
            </TeachGrid>
            <Row>
              <AddButton><Icon name="plus" size={14} />이 위치에 포인트 추가</AddButton>
              <EditButton $w={46} $h={39} aria-label="포인트 수정"><Icon name="edit" size={15} /></EditButton>
            </Row>
          </TeachCard>
        </Panel>
      </Body>

      <Footer>
        <Assistant>
          <AiMark $size={44}>AI</AiMark>
          <AssistantName>ARIA ASSISTANT<small>대기 중 · 음성/텍스트 명령 가능</small></AssistantName>
        </Assistant>
        <Ask>
          <input aria-label="명령" placeholder="무엇이든 물어보세요... (예: '20번 포인트로 이동해줘', 'U축 오차 분석해줘')" />
          <Bars width="43" height="13" viewBox="0 0 43 13" aria-hidden="true">
            {inputBars.map((h, i) => <rect key={i} x={i * 4.500} y={13 - h} width="2" height={h} rx="1" fill="#a6b6d2" />)}
          </Bars>
        </Ask>
        <MicButton aria-label="음성 입력"><Icon name="mic" size={18} /></MicButton>
        <Row>
          <Chip $w={121}>20번 포인트로 이동</Chip>
          <Chip $w={94}>U축 규약 확인</Chip>
          <Chip $w={96}>충돌 검사 실행</Chip>
          <Chip $w={106}>용접 경로만 보기</Chip>
          <MoreChip $w={40} aria-label="더 보기">···</MoreChip>
        </Row>
      </Footer>
    </Shell>
  );
}
